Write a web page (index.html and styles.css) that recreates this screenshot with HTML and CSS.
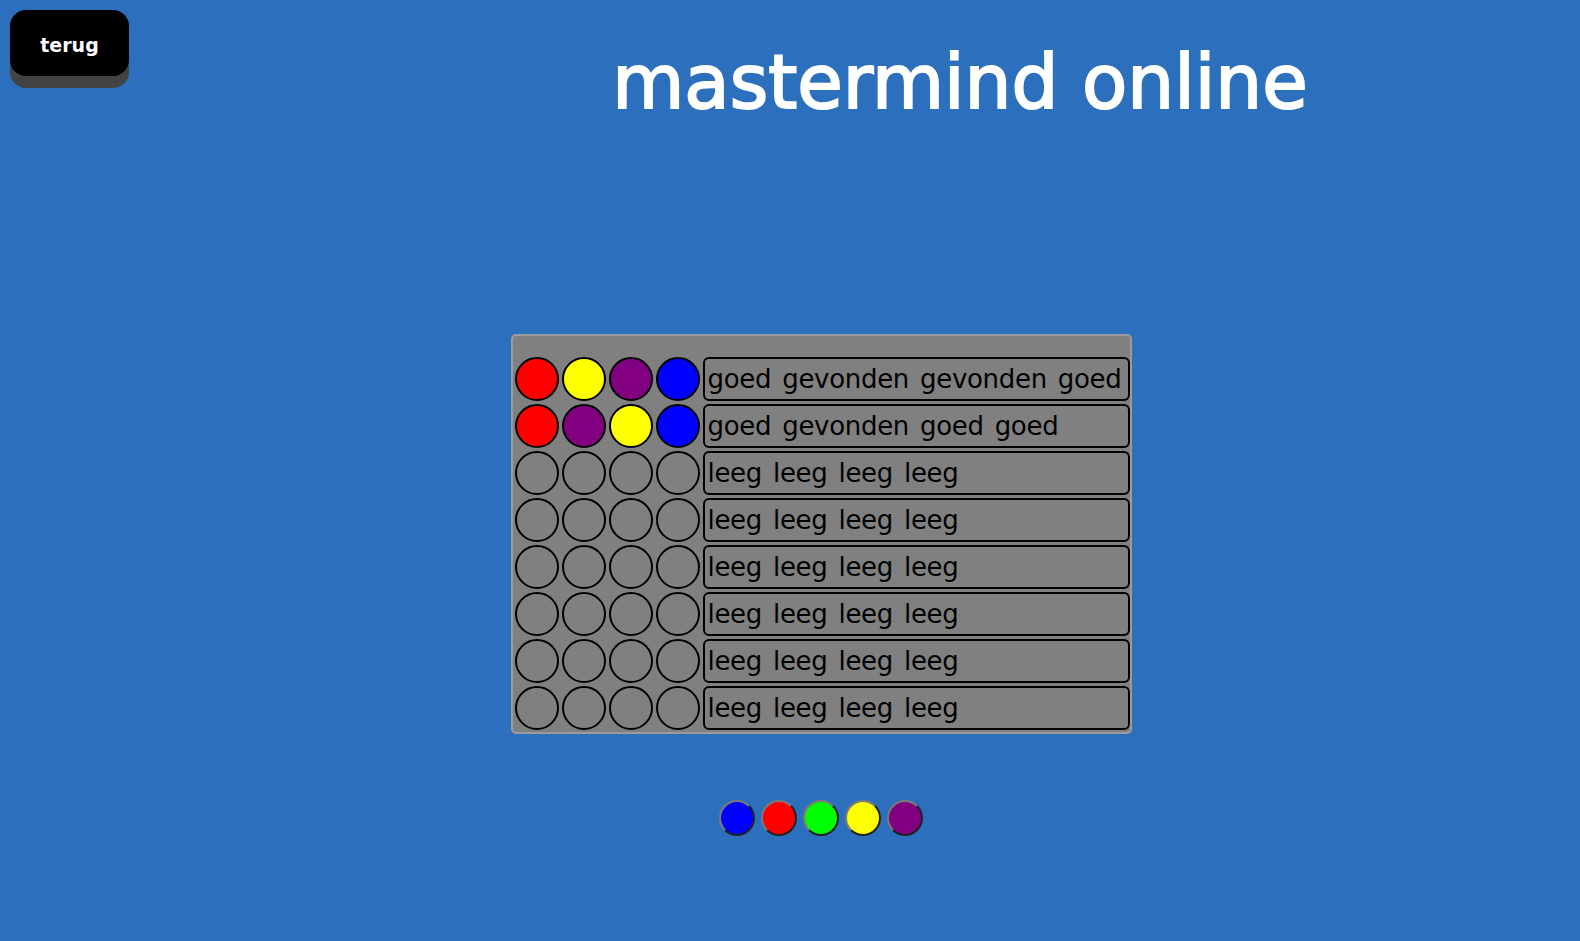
FILE: index.html
```html
<!DOCTYPE html>
<html lang="nl">
<head>
<meta charset="utf-8">
<title>mastermind online</title>
<link rel="stylesheet" href="styles.css">
</head>
<body>
<div class="page">
  <header class="top">
    <button class="back">terug</button>
    <h1 class="title">mastermind online</h1>
  </header>
  <main class="game">
    <div class="board">
      <div class="row">
        <span class="peg red"></span><span class="peg yellow"></span><span class="peg purple"></span><span class="peg blue"></span>
        <div class="result">goed gevonden gevonden goed</div>
      </div>
      <div class="row">
        <span class="peg red"></span><span class="peg purple"></span><span class="peg yellow"></span><span class="peg blue"></span>
        <div class="result">goed gevonden goed goed</div>
      </div>
      <div class="row">
        <span class="peg"></span><span class="peg"></span><span class="peg"></span><span class="peg"></span>
        <div class="result">leeg leeg leeg leeg</div>
      </div>
      <div class="row">
        <span class="peg"></span><span class="peg"></span><span class="peg"></span><span class="peg"></span>
        <div class="result">leeg leeg leeg leeg</div>
      </div>
      <div class="row">
        <span class="peg"></span><span class="peg"></span><span class="peg"></span><span class="peg"></span>
        <div class="result">leeg leeg leeg leeg</div>
      </div>
      <div class="row">
        <span class="peg"></span><span class="peg"></span><span class="peg"></span><span class="peg"></span>
        <div class="result">leeg leeg leeg leeg</div>
      </div>
      <div class="row">
        <span class="peg"></span><span class="peg"></span><span class="peg"></span><span class="peg"></span>
        <div class="result">leeg leeg leeg leeg</div>
      </div>
      <div class="row">
        <span class="peg"></span><span class="peg"></span><span class="peg"></span><span class="peg"></span>
        <div class="result">leeg leeg leeg leeg</div>
      </div>
    </div>
    <div class="palette">
      <button class="pick blue"></button>
      <button class="pick red"></button>
      <button class="pick green"></button>
      <button class="pick yellow"></button>
      <button class="pick purple"></button>
    </div>
  </main>
</div>
</body>
</html>
```

FILE: styles.css
```css
html, body {
  margin: 0;
  padding: 0;
}

body {
  background: #2c70bd;
  font-family: "Comic Sans MS", "Comic Neue", "DejaVu Sans", sans-serif;
  width: 1580px;
  height: 941px;
  overflow: hidden;
}

.top {
  display: flex;
  align-items: flex-start;
}

.back {
  margin: 10px 0 0 10px;
  width: 119px;
  height: 66px;
  border: none;
  border-radius: 16px;
  background: #000;
  color: #fff;
  font-family: "DejaVu Sans", sans-serif;
  font-weight: bold;
  font-size: 19px;
  box-shadow: 0 12px 0 #434343;
  display: flex;
  align-items: center;
  justify-content: center;
  padding: 3px 0 0 0;
  flex-shrink: 0;
}

.title {
  flex: 1;
  margin: 39px 0 0 0;
  padding-left: 211px;
  text-align: center;
  color: #fff;
  font-family: "DejaVu Sans", sans-serif;
  font-weight: normal;
  font-size: 74px;
  line-height: 86px;
  -webkit-text-stroke: 2px #fff;
}

.game {
  display: flex;
  flex-direction: column;
  align-items: center;
  padding: 209px 0 0 62px;
}

.board {
  background: #808080;
  border: 2px solid #9c9c9c;
  border-radius: 5px;
  padding: 21px 0 2px 2px;
  display: flex;
  flex-direction: column;
  gap: 3px;
}

.row {
  display: flex;
  gap: 3px;
  height: 44px;
}

.peg {
  width: 40px;
  height: 40px;
  border: 2px solid #000;
  border-radius: 50%;
  background: #808080;
  flex-shrink: 0;
}

.result {
  box-sizing: content-box;
  width: 420px;
  height: 40px;
  border: 2px solid #000;
  border-radius: 6px;
  display: flex;
  align-items: center;
  padding-left: 3px;
  font-family: "DejaVu Sans", sans-serif;
  font-size: 26px;
  letter-spacing: -0.3px;
  word-spacing: 3px;
  color: #000;
  white-space: nowrap;
  overflow: hidden;
}

.palette {
  margin-top: 66px;
  display: flex;
  gap: 6px;
}

.pick {
  width: 36px;
  height: 36px;
  padding: 0;
  border-radius: 50%;
  border: 2px solid;
  border-color: #7a7a7a #222 #222 #7a7a7a;
}

.red { background: #ff0000; }
.yellow { background: #ffff00; }
.purple { background: #800080; }
.blue { background: #0000ff; }
.green { background: #00ff00; }
```
